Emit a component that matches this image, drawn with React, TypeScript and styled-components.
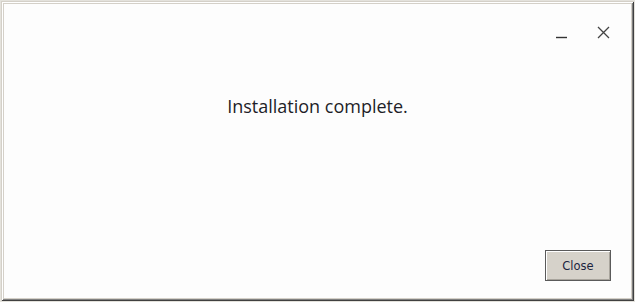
import React from 'react';
import styled, { createGlobalStyle } from 'styled-components';

const GlobalStyle = createGlobalStyle`
  html, body {
    margin: 0;
    padding: 0;
    background: #ffffff;
  }
`;

const Frame = styled.div`
  width: 635px;
  height: 302px;
  box-sizing: border-box;
  display: flex;
  flex-direction: column;
  background-color: #fdfdfd;
  border: 1px solid #e4e2dc;
  box-shadow:
    inset 1px 1px 0 #d4d0c8,
    inset -1px -1px 0 #404040,
    inset 2px 2px 0 #ffffff,
    inset -2px -2px 0 #808080,
    inset 3px 3px 0 #d4d0c8,
    inset -3px -3px 0 #d4d0c8;
`;

const TitleBar = styled.div`
  display: flex;
  justify-content: flex-end;
  align-items: center;
  gap: 28px;
  padding: 24px 24px 0 0;
`;

const IconButton = styled.button`
  width: 14px;
  height: 14px;
  padding: 0;
  border: none;
  background: transparent;
  display: flex;
  align-items: center;
  justify-content: center;
  cursor: pointer;
`;

const Message = styled.div`
  margin-top: 55px;
  text-align: center;
  font-family: 'Open Sans', 'Noto Sans', sans-serif;
  font-size: 18px;
  line-height: 24px;
  color: #1e1e28;
`;

const Footer = styled.div`
  margin-top: auto;
  display: flex;
  justify-content: flex-end;
  padding: 0 23px 20px 0;
`;

const CloseButton = styled.button`
  width: 66px;
  height: 31px;
  box-sizing: border-box;
  background-color: #d6d2ca;
  border: 1px solid #5a5a5a;
  box-shadow: inset 1px 1px 0 #ffffff, inset -1px -1px 0 #a8a49c;
  font-family: 'DejaVu Sans', 'Liberation Sans', sans-serif;
  font-size: 11.5px;
  color: #1c2440;
  cursor: pointer;
`;

const App: React.FC = () => {
  return (
    <>
      <GlobalStyle />
      <Frame>
        <TitleBar>
          <IconButton aria-label="Minimize">
            <svg width="13" height="14" viewBox="0 0 13 14">
              <line x1="1" y1="12.5" x2="12" y2="12.5" stroke="#333" strokeWidth="1.4" />
            </svg>
          </IconButton>
          <IconButton aria-label="Close">
            <svg width="13" height="13" viewBox="0 0 13 13">
              <path d="M1 1 L12 12 M12 1 L1 12" stroke="#444" strokeWidth="1.3" fill="none" />
            </svg>
          </IconButton>
        </TitleBar>
        <Message>Installation complete.</Message>
        <Footer>
          <CloseButton>Close</CloseButton>
        </Footer>
      </Frame>
    </>
  );
};

export default App;
